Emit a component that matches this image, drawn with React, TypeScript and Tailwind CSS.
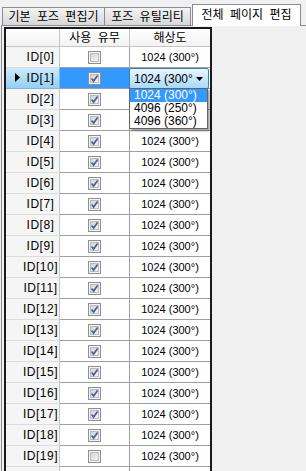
const rows = Array.from({ length: 20 }, (_, i) => ({
  id: i,
  checked: i !== 0 && i !== 19,
}));

const CheckBox = ({ checked }: { checked: boolean }) => (
  <svg width="13" height="13" viewBox="0 0 13 13">
    <defs>
      <linearGradient id="cbfill" x1="0" y1="0" x2="1" y2="1">
        <stop offset="0" stopColor="#d2d2d2" />
        <stop offset="1" stopColor="#f7f7f7" />
      </linearGradient>
    </defs>
    <rect x="0.5" y="0.5" width="12" height="12" fill="#f4f4f4" stroke="#8f8f8f" />
    <rect x="2.5" y="2.5" width="8" height="8" fill="url(#cbfill)" stroke="#bcbcbc" />
    {checked && (
      <path d="M3.6 6.4 L5.6 9 L9.6 3.4" fill="none" stroke="#4a5f9a" strokeWidth="1.7" />
    )}
  </svg>
);

export default function App() {
  return (
    <div className="w-[306px] h-[471px] overflow-hidden bg-[#f0f0f0] text-black [font-family:'Liberation_Sans','Noto_Sans_CJK_KR',sans-serif]">
      {/* tabs */}
      <div className="flex items-end h-[25px] pl-[2px] text-[12px] [word-spacing:3px]">
        <div className="w-[103px] h-[18px] border border-b-0 border-[#898c95] bg-linear-to-b from-[#f3f3f3] to-[#d8d8d8] flex items-center justify-center leading-none">
          기본 포즈 편집기
        </div>
        <div className="w-[86px] h-[18px] border border-b-0 border-l-0 border-[#898c95] bg-linear-to-b from-[#f3f3f3] to-[#d8d8d8] flex items-center justify-center leading-none">
          포즈 유틸리티
        </div>
        <div className="relative z-10 ml-[1px] -mb-[1px] w-[109px] h-[22px] border border-b-0 border-[#898c95] bg-white flex items-center justify-center leading-none pb-[2px]">
          전체 페이지 편집
        </div>
      </div>

      {/* panel */}
      <div className="ml-[1px] h-[446px] border-t border-l border-[#898c95] pt-[1px] pl-[2px]">
        <div className="w-[208px] border-2 border-b-0 border-[#1a1a1a] bg-white text-[11px]">
          {/* header */}
          <div className="flex h-[18px] text-[12px] bg-linear-to-b from-white to-[#f1f1f1]">
            <div className="w-[54px] border-r border-b border-[#c5c5c5]" />
            <div className="w-[70px] border-r border-b border-[#c5c5c5] flex items-center justify-center [word-spacing:3px]">
              사용 유무
            </div>
            <div className="w-[80px] border-b border-[#c5c5c5] flex items-center justify-center">
              해상도
            </div>
          </div>

          {rows.map((r) => {
            const sel = r.id === 1;
            // rows 2 and 3 sit under the open drop-down list
            const covered = r.id === 2 || r.id === 3;
            return (
              <div key={r.id} className="flex h-[21px]">
                <div
                  className={
                    sel
                      ? "relative w-[54px] border-r border-b border-[#7fb6da] bg-linear-to-b from-[#cdeafc] to-[#93cff4] flex items-center pl-[16px] text-[12px] tracking-[0.5px]"
                      : "w-[54px] border-r border-b border-r-[#c5c5c5] border-b-[#dcdcdc] bg-[#f5f5f5] flex items-center pl-[16px] text-[12px] tracking-[0.5px]"
                  }
                >
                  {sel && (
                    <svg className="absolute left-[9px] top-[5px]" width="5" height="9" viewBox="0 0 5 9">
                      <path d="M0 0 L5 4.5 L0 9 Z" fill="#000" />
                    </svg>
                  )}
                  <span className="w-[38px] text-center">ID[{r.id}]</span>
                </div>
                <div
                  className={
                    sel
                      ? "w-[70px] border-r border-b border-[#a0a0a0] bg-[#3399ff] flex items-center justify-center"
                      : "w-[70px] border-r border-b border-[#a0a0a0] flex items-center justify-center"
                  }
                >
                  <CheckBox checked={r.checked} />
                </div>
                <div className="relative w-[80px] border-b border-[#a0a0a0] flex items-center justify-center">
                  {sel ? (
                    <>
                      <div className="absolute -left-[1px] top-0 w-[80px] h-[21px] z-10 border border-[#3c7fb1] rounded-[2px] bg-linear-to-b from-[#eaf6fd] via-[#c9e8fb] to-[#a7d9f5] flex items-center pl-[4px] text-[12px]">
                        <span className="whitespace-nowrap overflow-hidden w-[60px]">1024 (300°</span>
                        <svg className="ml-auto mr-[5px]" width="7" height="4" viewBox="0 0 7 4">
                          <path d="M0 0 L7 0 L3.5 4 Z" fill="#000" />
                        </svg>
                      </div>
                      <div className="absolute -left-[1px] top-[20px] z-20 w-[79px] border border-[#646464] bg-white shadow-[2px_2px_2px_rgba(0,0,0,0.35)] text-[12px] leading-[13px]">
                        <div className="h-[13px] pl-[4px] bg-[#3399ff] text-white">1024 (300°)</div>
                        <div className="h-[13px] pl-[4px]">4096 (250°)</div>
                        <div className="h-[13px] pl-[4px]">4096 (360°)</div>
                      </div>
                    </>
                  ) : (
                    <span className={covered ? "invisible" : ""}>1024 (300°)</span>
                  )}
                </div>
              </div>
            );
          })}
          <div className="flex h-[21px]">
            <div className="w-[54px] border-r border-[#c5c5c5] bg-[#f5f5f5]" />
            <div className="w-[70px] border-r border-[#a0a0a0]" />
            <div className="w-[80px]" />
          </div>
        </div>
      </div>
    </div>
  );
}
